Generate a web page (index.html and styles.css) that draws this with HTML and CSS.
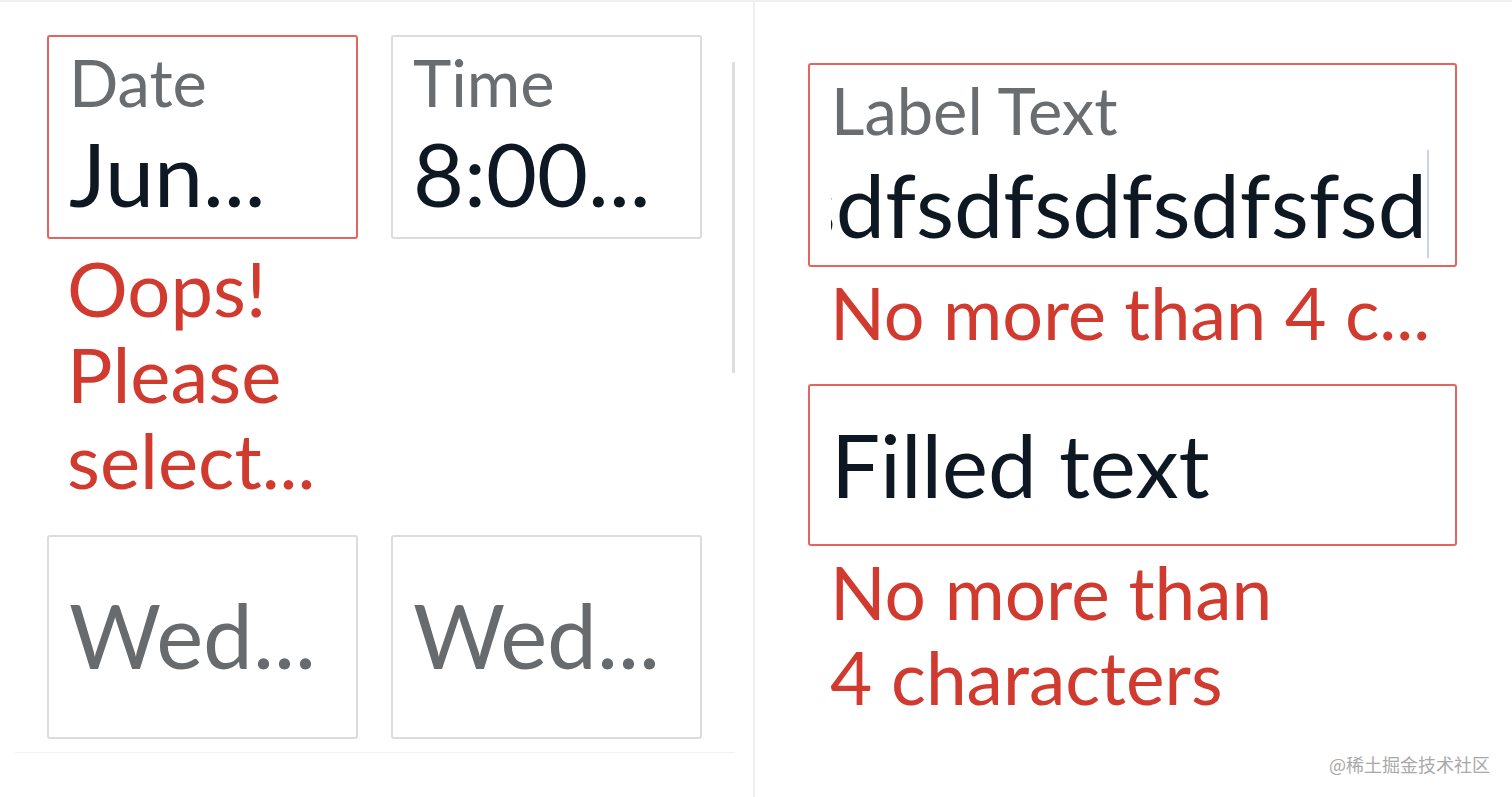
FILE: index.html
```html
<!DOCTYPE html>
<html lang="en">
<head>
    <meta charset="UTF-8">
    <meta name="viewport" content="width=device-width, initial-scale=1.0">
    <title>Form fields</title>
    <link rel="stylesheet" href="styles.css">
</head>
<body>
<div class="page">
    <div class="left">
        <div class="grid">
            <div class="field error">
                <div class="label">Date</div>
                <div class="value">Jun...</div>
            </div>
            <div class="field">
                <div class="label">Time</div>
                <div class="value">8:00...</div>
            </div>
            <div class="msg msg-left">Oops!<br>Please<br>select...</div>
            <div></div>
            <div class="field empty">
                <div class="placeholder">Wed...</div>
            </div>
            <div class="field empty">
                <div class="placeholder">Wed...</div>
            </div>
        </div>
        <div class="scrollbar"></div>
    </div>
    <div class="right">
        <div class="wide error">
            <div class="label">Label Text</div>
            <div class="typed">
                <span>sdfsdfsdfsdfsdfsdfsdfsfsd</span><span class="caret"></span>
            </div>
        </div>
        <div class="msg msg-one">No more than 4 c...</div>
        <div class="wide error filled">
            <div class="value">Filled text</div>
        </div>
        <div class="msg msg-two">No more than<br>4 characters</div>
        <div class="mark">@稀土掘金技术社区</div>
    </div>
</div>
</body>
</html>
```

FILE: styles.css
```css
body {
    margin: 0;
    font-family: Lato, "Open Sans", sans-serif;
    background: #fff;
}
.page {
    display: flex;
    height: 797px;
    border-top: 2px solid #efefef;
    box-sizing: border-box;
    overflow: hidden;
}
.left {
    flex: none;
    width: 755px;
    border-right: 2px solid #efefef;
    position: relative;
    box-sizing: border-box;
}
.grid {
    display: grid;
    grid-template-columns: 311px 311px;
    column-gap: 33px;
    padding: 33px 0 13px 32px;
    margin: 0 18px 0 15px;
    border-bottom: 1px solid #f3f3f3;
}
.field {
    height: 204px;
    box-sizing: border-box;
    border: 2px solid #dcdcdc;
    border-radius: 3px;
    padding: 10px 0 0 20px;
    overflow: hidden;
    white-space: nowrap;
}
.field.error, .wide.error {
    border-color: #e2665e;
}
.label {
    font-size: 65px;
    line-height: 70px;
    color: #6a6d70;
}
.value {
    font-size: 88px;
    line-height: 112px;
    color: #0e1823;
}
.field.empty {
    padding-top: 48px;
}
.placeholder {
    font-size: 89px;
    line-height: 100px;
    color: #676b6e;
}
.msg {
    color: #d13b2f;
    font-size: 76px;
    line-height: 86px;
}
.msg-left {
    padding: 6px 0 32px 20px;
}
.scrollbar {
    position: absolute;
    top: 60px;
    right: 18px;
    width: 3px;
    height: 311px;
    background: #dedede;
}
.right {
    flex: 1;
    min-width: 0;
    padding: 61px 55px 0 53px;
    position: relative;
}
.wide {
    height: 204px;
    box-sizing: border-box;
    border: 2px solid #dcdcdc;
    border-radius: 3px;
    padding: 10px 0 0 21px;
}
.typed {
    display: flex;
    justify-content: flex-end;
    overflow: hidden;
    white-space: nowrap;
    font-size: 88px;
    line-height: 108px;
    color: #0e1823;
    margin: 5px 26px 0 0;
}
.caret {
    display: inline-block;
    flex: none;
    width: 2px;
    height: 108px;
    background: #c9d3ee;
}
.right .msg {
    font-size: 73px;
    line-height: 85px;
}
.right .msg-one {
    font-size: 72px;
    padding: 3px 0 0 22px;
    white-space: nowrap;
}
.filled {
    height: 162px;
    margin-top: 29px;
    display: flex;
    align-items: center;
    padding-top: 0;
}
.filled .value {
    font-size: 87px;
}
.msg-two {
    padding: 4px 0 0 22px;
}
.mark {
    position: absolute;
    right: 22px;
    bottom: 20px;
    font-size: 18px;
    color: #a9a9a9;
    font-family: "Noto Sans CJK SC", sans-serif;
}
```
